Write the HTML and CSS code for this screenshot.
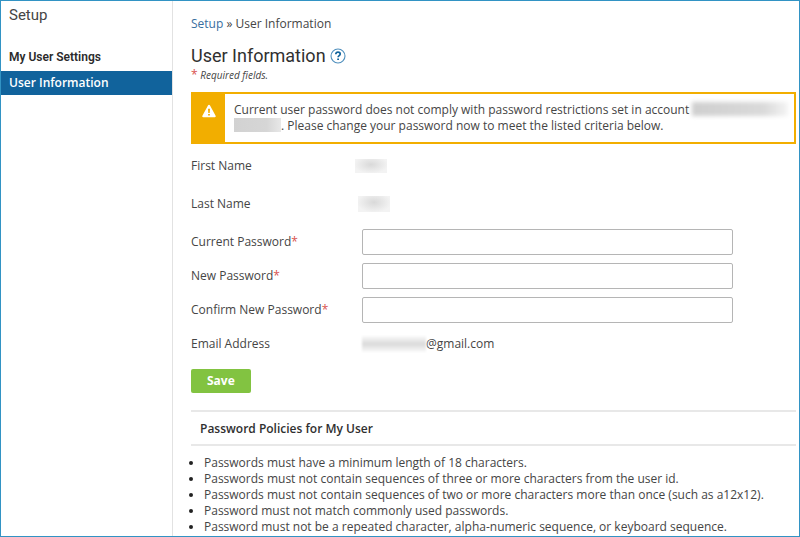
FILE: index.html
```html
<!DOCTYPE html>
<html lang="en">
<head>
<meta charset="utf-8">
<meta name="viewport" content="width=device-width, initial-scale=1">
<title>User Information</title>
<link rel="stylesheet" href="styles.css">
</head>
<body>
<div class="app">
  <nav class="sidebar">
    <div class="sidebar-title">Setup</div>
    <div class="sidebar-heading">My User Settings</div>
    <a class="sidebar-link" href="#">User Information</a>
  </nav>
  <main class="content">
    <div class="breadcrumb"><a href="#">Setup</a> » User Information</div>
    <header class="page-head">
      <h1>User Information</h1>
      <a class="help" href="#">
        <svg width="16" height="16" viewBox="0 0 16 16" fill="none">
          <circle cx="8" cy="8" r="7" stroke="#4f8fbd" stroke-width="1.1"/>
          <path d="M5.8 6.3C5.8 4.9 6.7 4.2 8 4.2s2.2.7 2.2 1.9c0 1.5-2.1 1.6-2.1 3.2" stroke="#11639c" stroke-width="1.7"/>
          <path d="M7.2 10.4h1.8v1.7H7.2z" fill="#11639c"/>
        </svg>
      </a>
    </header>
    <p class="required-note"><span class="star">*</span> Required fields.</p>

    <div class="alert">
      <div class="alert-icon">
        <svg width="14" height="14" viewBox="0 0 14 14">
          <path d="M7 .8c.4 0 .7.2.9.5l5.7 10.4c.4.7 0 1.5-.8 1.5H1.2c-.8 0-1.200-.8-.8-1.500L6.100 1.300c.2-.3.500-.5.900-.5z" fill="#fff"/>
          <path d="M6 4.800h2L7.700 8.900H6.300zM6.100 9.900h1.800v1.700H6.100z" fill="#f2ae00"/>
        </svg>
      </div>
      <p class="alert-text">Current user password does not comply with password restrictions set in account <span class="redacted account-start"></span> <span class="redacted account-end"></span>. Please change your password now to meet the listed criteria below.</p>
    </div>

    <form class="form">
      <div class="names">
        <div class="row row-name"><span class="label">First Name</span><span class="redacted name first"></span></div>
        <div class="row row-name"><span class="label">Last Name</span><span class="redacted name"></span></div>
      </div>
      <div class="row"><label class="label" for="current">Current Password<span class="star">*</span></label><input id="current" type="password"></div>
      <div class="row"><label class="label" for="new">New Password<span class="star">*</span></label><input id="new" type="password"></div>
      <div class="row"><label class="label" for="confirm">Confirm New Password<span class="star">*</span></label><input id="confirm" type="password"></div>
      <div class="row"><span class="label">Email Address</span><span class="redacted email"></span><span>@gmail.com</span></div>
      <button class="save" type="submit">Save</button>
    </form>

    <section>
      <h2>Password Policies for My User</h2>
      <ul class="policies">
        <li>Passwords must have a minimum length of 18 characters.</li>
        <li>Passwords must not contain sequences of three or more characters from the user id.</li>
        <li>Passwords must not contain sequences of two or more characters more than once (such as a12x12).</li>
        <li>Password must not match commonly used passwords.</li>
        <li>Password must not be a repeated character, alpha-numeric sequence, or keyboard sequence.</li>
      </ul>
    </section>
  </main>
</div>
</body>
</html>
```

FILE: styles.css
```css
* {
  box-sizing: border-box;
}

body {
  margin: 0;
  background: #fff;
  color: #454545;
  font: 12px/16px "Open Sans", "Noto Sans", sans-serif;
}

h1, h2, p, ul {
  margin: 0;
  padding: 0;
}

a {
  color: #3a6ea0;
  text-decoration: none;
}

.app {
  display: grid;
  grid-template-columns: 172px minmax(0, 1fr);
  min-height: 100vh;
  border: 1px solid #3293c4;
}

.sidebar {
  padding-top: 4px;
  border-right: 1px solid #e2e2e2;
  font-family: Roboto, sans-serif;
}

.sidebar-title {
  padding-left: 8px;
  font-size: 15px;
  line-height: 20px;
}

.sidebar-heading {
  margin-top: 24px;
  padding: 0 8px 6px;
  color: #2b2b2b;
  font-weight: 600;
  line-height: 16px;
}

.sidebar-link {
  display: block;
  padding: 0 8px;
  background: #11639c;
  color: #fff;
  font-family: "Open Sans", sans-serif;
  font-weight: 600;
  line-height: 24px;
}

.content {
  padding: 15px 3px 0 18px;
}

.page-head {
  display: flex;
  align-items: center;
  gap: 4px;
  margin-top: 12px;
}

h1 {
  color: #303030;
  font: 400 18px/24px Roboto, sans-serif;
}

.help {
  display: flex;
}

.required-note {
  font-size: 10px;
  font-style: italic;
  line-height: 14px;
}

.star {
  color: #d9534f;
  font-style: normal;
}

.required-note .star {
  font-size: 12px;
}

.alert {
  display: flex;
  margin-top: 10px;
  border: 2px solid #f2ae00;
}

.alert-icon {
  flex: 0 0 32px;
  padding-top: 10px;
  background: #f2ae00;
  text-align: center;
}

.alert-text {
  padding: 8px 4px 8px 9px;
}

.redacted {
  display: inline-block;
  background: radial-gradient(ellipse at 50% 40%, #d9d9d9, #f3f3f3 75%);
}

.account-start {
  width: 96px;
  height: 14px;
  background: linear-gradient(90deg, #cfcfcf, #dadada 75%, #f4f4f4);
  filter: blur(2px);
  vertical-align: top;
}

.account-end {
  width: 47px;
  height: 14px;
  background: linear-gradient(90deg, #d2d2d2, #d6d6d6 70%, #e8e8e8);
  vertical-align: top;
}

.names {
  padding: 3px 0 2px;
}

.row {
  display: flex;
  align-items: center;
  min-height: 34px;
}

.row-name {
  min-height: 38px;
}

.label {
  flex: 0 0 171px;
}

.name {
  width: 32px;
  height: 16px;
  margin-left: -4px;
}

.first {
  height: 14px;
  margin-left: -7px;
}

.email {
  width: 64px;
  height: 16px;
  background: linear-gradient(#fafafa, #dadada 50%, #fafafa);
  filter: blur(1px);
}

input {
  flex: 0 1 371px;
  min-width: 0;
  height: 26px;
  padding: 0 6px;
  border: 1px solid #b5b5b5;
  border-radius: 2px;
  background: #fff;
  font: inherit;
}

.save {
  display: block;
  height: 24px;
  margin-top: 8px;
  padding: 0 16px;
  border: 0;
  border-radius: 2px;
  background: #82c341;
  color: #fff;
  font: 700 12px/16px "Open Sans", sans-serif;
}

h2 {
  margin-top: 17px;
  padding: 9px 9px 7px;
  border: solid #e8e8e8;
  border-width: 2px 0;
  color: #2f2f2f;
  font: 600 12px/16px "Open Sans", sans-serif;
}

.policies {
  margin-top: 9px;
  padding-left: 13px;
}

.policies li::marker {
  color: #222;
}
```
